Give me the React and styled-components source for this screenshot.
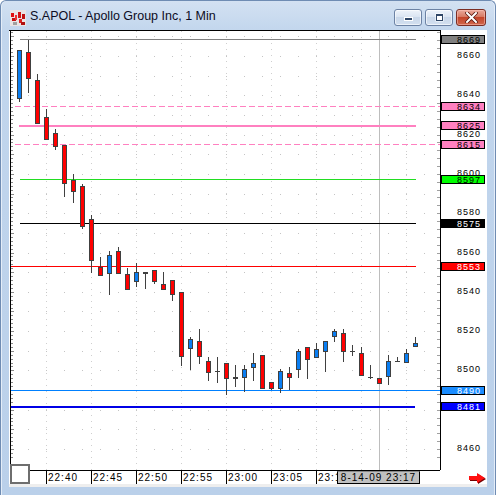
import React from "react";
import styled, { createGlobalStyle } from "styled-components";

const GlobalStyle = createGlobalStyle`
  html, body { margin: 0; padding: 0; background: #ffffff; }
  body { font-family: "Liberation Sans", Arial, sans-serif; }
`;

// price -> y in page pixels (chart was built in page coordinates)
const Y = (p) => 56 + (8660 - p) * 1.965;
const RED = "#ff0000";
const BLUE = "#0a7ef2";
const EDGE = "#404040";

// [high, bodyTop, bodyBottom, low, dir] in y pixels, one per minute from 22:37
const candles = [
  [50, 50, 99, 102, "u"], [40, 52, 79, 93, "d"], [74, 80, 124, 124, "d"],
  [109, 117, 140, 140, "d"], [129, 133, 147, 150, "d"], [145, 145, 184, 197, "d"],
  [174, 180, 192, 203, "d"], [184, 186, 227, 229, "d"], [215, 219, 261, 273, "d"],
  [257, 267, 276, 276, "d"], [251, 255, 274, 295, "u"], [247, 251, 274, 274, "d"],
  [268, 274, 290, 290, "d"], [263, 272, 282, 287, "u"], [272, 272, 274, 289, "d"],
  [270, 270, 282, 284, "d"], [272, 284, 290, 290, "d"], [280, 280, 295, 301, "d"],
  [292, 292, 357, 366, "d"], [337, 339, 349, 370, "u"], [329, 341, 357, 364, "d"],
  [357, 361, 373, 381, "d"], [357, 371, 371, 383, "n"], [363, 363, 379, 395, "d"],
  [365, 377, 379, 387, "u"], [365, 369, 378, 392, "u"], [353, 363, 368, 381, "u"],
  [355, 355, 389, 389, "d"], [382, 382, 389, 390, "d"], [369, 371, 389, 393, "u"],
  [367, 373, 378, 390, "d"], [349, 351, 370, 378, "u"], [347, 347, 360, 379, "d"],
  [343, 349, 358, 358, "u"], [341, 341, 352, 372, "u"], [329, 331, 337, 342, "u"],
  [329, 333, 352, 362, "d"], [345, 351, 351, 356, "n"], [347, 353, 376, 376, "d"],
  [365, 377, 377, 379, "n"], [378, 378, 384, 384, "d"], [355, 361, 377, 385, "u"],
  [357, 361, 361, 361, "n"], [349, 353, 363, 363, "u"], [337, 343, 347, 347, "u"],
];

const levels = [
  { price: 8669, y: 39.5, x1: 20, x2: 416, color: "#808080", bg: "#808080", fg: "#000" },
  { price: 8634, y: 106.5, x1: 15, x2: 440, color: "#ff80c0", dash: "6 3", bg: "#ff80c0", fg: "#000" },
  { price: 8625, y: 126, x1: 19, x2: 416, color: "#ff80c0", width: 2, bg: "#ff80c0", fg: "#000" },
  { price: 8615, y: 144.5, x1: 15, x2: 440, color: "#ff80c0", dash: "6 3", bg: "#ff80c0", fg: "#000" },
  { price: 8597, y: 179.5, x1: 20, x2: 416, color: "#22dd22", bg: "#00ff00", fg: "#000" },
  { price: 8575, y: 223.5, x1: 20, x2: 416, color: "#000000", bg: "#000000", fg: "#fff" },
  { price: 8553, y: 266.5, x1: 10, x2: 416, color: "#ff0000", bg: "#ff0000", fg: "#fff" },
  { price: 8490, y: 390.5, x1: 10, x2: 440, color: "#0080ff", bg: "#1a8cff", fg: "#fff" },
  { price: 8481, y: 407, x1: 10, x2: 415, color: "#0000e6", width: 2, bg: "#0000ff", fg: "#fff" },
];

// 8480 sits fully under the 8481 tag, so it is left out
const axisPrices = [8660, 8640, 8620, 8600, 8580, 8560, 8540, 8520, 8500, 8460];
const times = ["22:40", "22:45", "22:50", "22:55", "23:00", "23:05"];

//styled comp
const Window = styled.div`
  width: 496px;
  height: 495px;
  box-sizing: border-box;
  border: 1px solid #6f8cb3;
  border-bottom: none;
  border-radius: 6px 6px 0 0;
  padding: 0 8px 8px 8px;
  display: flex;
  flex-direction: column;
  background: linear-gradient(to bottom, #d3e1f2 0, #c2d6ed 30px, #bad0ea 100%);
  box-shadow: inset 1px 0 0 #e4edf8, inset -1px 0 0 #e4edf8;
`;

const TitleBar = styled.div`
  height: 29px;
  box-sizing: border-box;
  padding: 8px 1px 0 1px;
  display: flex;
  align-items: flex-start;
`;

const AppIcon = styled.svg`
  width: 16px;
  height: 16px;
  margin-top: 1px;
  flex-shrink: 0;
`;

const Title = styled.div`
  margin-left: 4px;
  font-size: 12.5px;
  line-height: 15px;
  color: #0c0c24;
  white-space: nowrap;
`;

const Controls = styled.div`
  margin-left: auto;
  display: flex;
  gap: 3px;
`;

const CaptionButton = styled.div`
  width: 28px;
  height: 17px;
  box-sizing: border-box;
  border: 1px solid #6c82a4;
  border-radius: 3px;
  display: flex;
  align-items: center;
  justify-content: center;
  background: linear-gradient(to bottom, #eef3fa 0%, #dbe5f2 45%, #c9d7e9 50%, #d3e0f0 100%);
  box-shadow: inset 0 0 0 1px rgba(255, 255, 255, 0.6);
`;

const CloseButton = styled(CaptionButton)`
  width: 30px;
  border-color: #7b2e24;
  background: linear-gradient(to bottom, #e9a99b 0%, #d77a64 45%, #c4452a 50%, #d0684d 100%);
  box-shadow: inset 0 0 0 1px rgba(255, 200, 190, 0.5);
`;

const Client = styled.div`
  flex: 1;
  display: flex;
  flex-direction: column;
  background: #eeeeee;
`;

const ChartRow = styled.div`
  display: flex;
  height: 440px;
  background: #ffffff;
`;

const PlotSvg = styled.svg`
  display: block;
  width: 432px;
  height: 440px;
  flex-shrink: 0;
`;

const PriceAxis = styled.svg`
  display: block;
  width: 46px;
  height: 440px;
  flex-shrink: 0;
`;

const TimeRow = styled.div`
  display: flex;
  height: 14px;
  background: #ffffff;
`;

const CornerBox = styled.div`
  width: 20px;
  height: 20px;
  margin: -6px 0 0 1px;
  box-sizing: border-box;
  border: 2px solid #6e6e6e;
  background: #ffffff;
  flex-shrink: 0;
`;

const TimeAxis = styled.div`
  width: 410px;
  box-sizing: border-box;
  border-top: 1px solid #000;
  display: flex;
  padding-left: 16px;
`;

const TimeCell = styled.div`
  width: ${(p) => p.$w || 45}px;
  flex-shrink: 0;
  box-sizing: border-box;
  border-left: 1px solid #000;
  padding-left: 1px;
  overflow: hidden;
  font-size: 10px;
  line-height: 13px;
  letter-spacing: 1px;
  color: #000;
  white-space: nowrap;
`;

const DateTag = styled.div`
  width: 83px;
  height: 13px;
  flex-shrink: 0;
  box-sizing: border-box;
  border: 1px solid #000;
  border-top-color: #888;
  background: #c0c0c0;
  font-size: 10px;
  line-height: 11px;
  letter-spacing: 1px;
  text-align: center;
  color: #000;
`;

const ArrowSlot = styled.div`
  flex: 1;
  display: flex;
  justify-content: flex-end;
  align-items: flex-end;
`;

const AxisText = styled.text`
  font-family: "Liberation Sans", Arial, sans-serif;
  font-size: 9px;
  letter-spacing: 1px;
`;

const Plot = () => {
  const grid = [];
  for (let p = 8460; p <= 8670; p += 10) grid.push(Math.round(Y(p)) + 0.5);
  const ticks = [];
  for (let p = 8456; p <= 8672; p += 2) ticks.push({ y: Math.round(Y(p)) + 0.5, major: p % 10 === 0 });
  const vgrid = [46, 91, 136, 181, 226, 271, 316, 361, 406];

  return (
    <PlotSvg viewBox="9 30 432 440">
      <rect x="9" y="30" width="432" height="440" fill="#fff" />
      {grid.map((y) => (
        <line key={"h" + y} x1="28" x2="440" y1={y} y2={y} stroke="#c4c4c4" strokeDasharray="1 17" />
      ))}
      {vgrid.map((x) => (
        <line key={"v" + x} x1={x + 0.5} x2={x + 0.5} y1="31" y2="470" stroke="#cfcfcf" strokeDasharray="1 5" />
      ))}
      {ticks.map((t) => (
        <line key={"t" + t.y} x1="11" x2={t.major ? 14 : 13} y1={t.y} y2={t.y} stroke="#8a8a8a" />
      ))}
      {ticks.filter((t, i) => i % 2 === 0).map((t) => (
        <line key={"r" + t.y} x1="437" x2="440" y1={t.y} y2={t.y} stroke="#a0a0a0" />
      ))}
      <line x1="379.5" x2="379.5" y1="31" y2="470" stroke="#bdbdbd" />
      {levels.map((l) => (
        <line
          key={l.price}
          x1={l.x1}
          x2={l.x2}
          y1={l.y}
          y2={l.y}
          stroke={l.color}
          strokeWidth={l.width || 1}
          strokeDasharray={l.dash}
        />
      ))}
      {candles.map(([h, t, b, lo, dir], i) => {
        const cx = 19.5 + 9 * i;
        return (
          <g key={i}>
            <line x1={cx} x2={cx} y1={h} y2={lo} stroke={EDGE} />
            {dir === "n" ? (
              <line x1={cx - 2.5} x2={cx + 2.5} y1={t + 0.5} y2={t + 0.5} stroke={EDGE} />
            ) : (
              <rect
                x={cx - 2}
                y={t + 0.5}
                width="4"
                height={Math.max(b - t - 1, 1)}
                fill={dir === "u" ? BLUE : RED}
                stroke={EDGE}
              />
            )}
          </g>
        );
      })}
      <line x1="9" x2="441" y1="30.5" y2="30.5" stroke="#000" />
      <line x1="10.5" x2="10.5" y1="30" y2="464" stroke="#000" />
      <line x1="440.5" x2="440.5" y1="30" y2="470" stroke="#000" />
    </PlotSvg>
  );
};

const Prices = () => (
  <PriceAxis viewBox="441 30 46 440">
    <defs>
      {/* 8600 peeks out above the green 8597 tag */}
      <clipPath id="above8597">
        <rect x="441" y="30" width="46" height={Math.round(levels[4].y) - 4.5 - 30} />
      </clipPath>
    </defs>
    <rect x="441" y="30" width="46" height="440" fill="#fff" />
    {axisPrices.map((p) => (
      <AxisText
        key={p}
        x="469"
        y={Y(p) + 2}
        textAnchor="middle"
        fill="#000"
        clipPath={p === 8600 ? "url(#above8597)" : undefined}
      >
        {p}
      </AxisText>
    ))}
    {levels.map((l) => {
      const cy = Math.round(l.y);
      return (
        <g key={l.price}>
          <rect x="441.5" y={cy - 4.5} width="43" height="8" fill={l.bg} stroke="#000" />
          <AxisText x="469" y={cy + 3} textAnchor="middle" fill={l.fg}>
            {l.price}
          </AxisText>
        </g>
      );
    })}
  </PriceAxis>
);

const App = () => {
  return (
    <>
      <GlobalStyle />
      <Window>
        <TitleBar>
          <AppIcon viewBox="0 0 16 16">
            <rect x="0" y="0" width="16" height="16" fill="#e9e4e4" />
            <rect x="1" y="3" width="3" height="4" fill="#e01010" />
            <rect x="2" y="8" width="4" height="3" fill="#c81010" />
            <rect x="5" y="5" width="2" height="5" fill="#f03030" />
            <rect x="8" y="2" width="3" height="6" fill="#d01515" />
            <rect x="9" y="9" width="3" height="4" fill="#e02020" />
            <rect x="12" y="4" width="3" height="5" fill="#c01010" />
            <rect x="3" y="12" width="4" height="3" fill="#a0a0a0" />
            <rect x="11" y="12" width="4" height="3" fill="#b01010" />
          </AppIcon>
          <Title>S.APOL - Apollo Group Inc, 1 Min</Title>
          <Controls>
            <CaptionButton>
              <svg width="11" height="9" viewBox="0 0 11 9">
                <rect x="1.5" y="4.5" width="8" height="3" fill="#2f4666" stroke="#fff" />
              </svg>
            </CaptionButton>
            <CaptionButton>
              <svg width="11" height="9" viewBox="0 0 11 9">
                <rect x="1.5" y="0.5" width="8" height="8" fill="#fff" />
                <rect x="2.5" y="1.5" width="6" height="6" fill="none" stroke="#2f4666" />
                <rect x="2.5" y="1.5" width="6" height="1.5" fill="#2f4666" />
              </svg>
            </CaptionButton>
            <CloseButton>
              <svg width="13" height="11" viewBox="0 0 13 11">
                <path d="M2 1 L11 10 M11 1 L2 10" stroke="#5a1a12" strokeWidth="3.6" strokeLinecap="square" />
                <path d="M2 1 L11 10 M11 1 L2 10" stroke="#fff" strokeWidth="2" strokeLinecap="square" />
              </svg>
            </CloseButton>
          </Controls>
        </TitleBar>
        <Client>
          <ChartRow>
            <Plot />
            <Prices />
          </ChartRow>
          <TimeRow>
            <CornerBox />
            <TimeAxis>
              {times.map((t) => (
                <TimeCell key={t}>{t}</TimeCell>
              ))}
              <TimeCell $w={21}>23:10</TimeCell>
              <DateTag>8-14-09 23:17</DateTag>
            </TimeAxis>
            <ArrowSlot>
              <svg width="18" height="11" viewBox="0 0 18 11">
                <polygon points="1,4 9,4 9,1 17,6 9,11 9,8 1,8" fill="#700" />
                <polygon points="0,3 8,3 8,0 16,5 8,10 8,7 0,7" fill="#ff1010" />
              </svg>
            </ArrowSlot>
          </TimeRow>
        </Client>
      </Window>
    </>
  );
};

export default App;
